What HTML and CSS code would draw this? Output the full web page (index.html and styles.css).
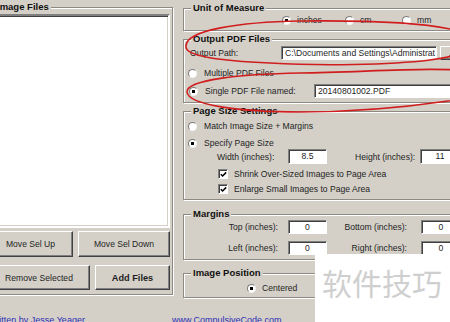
FILE: index.html
```html
<!DOCTYPE html>
<html>
<head>
<meta charset="utf-8">
<link rel="stylesheet" href="styles.css">
</head>
<body>
<div class="win">
  <div class="main">
    <div class="left">
      <fieldset class="grp grp-files">
        <legend class="ttl">Image Files</legend>
        <div class="list"></div>
        <div class="btnrow r1">
          <button class="btn b-up">Move Sel Up</button>
          <button class="btn b-down">Move Sel Down</button>
        </div>
        <div class="btnrow r2">
          <button class="btn b-rem">Remove Selected</button>
          <button class="btn b-add">Add Files</button>
        </div>
      </fieldset>
    </div>
    <div class="right">
      <fieldset class="grp g-unit">
        <legend class="ttl">Unit of Measure</legend>
        <div class="row units">
          <span class="opt o-in"><span class="rad on"></span><span>inches</span></span>
          <span class="opt o-cm"><span class="rad"></span><span>cm</span></span>
          <span class="opt o-mm"><span class="rad"></span><span>mm</span></span>
        </div>
      </fieldset>
      <fieldset class="grp g-out">
        <legend class="ttl">Output PDF Files</legend>
        <div class="row r-path">
          <span class="lbl l-path">Output Path:</span>
          <span class="inp i-path">C:\Documents and Settings\Administrat</span>
          <button class="btn browse">...</button>
        </div>
        <div class="row r-multi">
          <span class="rad"></span><span class="rlbl">Multiple PDF Files</span>
        </div>
        <div class="row r-single">
          <span class="rad on"></span><span class="rlbl l-single">Single PDF File named:</span>
          <span class="inp i-single">20140801002.PDF</span>
        </div>
      </fieldset>
      <fieldset class="grp g-page">
        <legend class="ttl">Page Size Settings</legend>
        <div class="row r-match">
          <span class="rad"></span><span class="rlbl">Match Image Size + Margins</span>
        </div>
        <div class="row r-spec">
          <span class="rad on"></span><span class="rlbl">Specify Page Size</span>
        </div>
        <div class="row r-wh">
          <span class="lbl l-w">Width (inches):</span>
          <span class="inp num i-w">8.5</span>
          <span class="lbl l-h">Height (inches):</span>
          <span class="inp num i-h">11</span>
        </div>
        <div class="row r-chk1">
          <span class="chk"><svg width="7" height="7" viewBox="0 0 7 7"><path d="M0.8,3.2 L2.6,5 L6.2,1.4" fill="none" stroke="#000" stroke-width="1.5"/></svg></span>
          <span class="clbl">Shrink Over-Sized Images to Page Area</span>
        </div>
        <div class="row r-chk2">
          <span class="chk"><svg width="7" height="7" viewBox="0 0 7 7"><path d="M0.8,3.2 L2.6,5 L6.2,1.4" fill="none" stroke="#000" stroke-width="1.5"/></svg></span>
          <span class="clbl">Enlarge Small Images to Page Area</span>
        </div>
      </fieldset>
      <fieldset class="grp g-marg">
        <legend class="ttl">Margins</legend>
        <div class="row r-m1">
          <span class="lbl ml1">Top (inches):</span>
          <span class="inp num i-m">0</span>
          <span class="lbl ml2">Bottom (inches):</span>
          <span class="inp num i-m2">0</span>
        </div>
        <div class="row r-m2">
          <span class="lbl ml1">Left (inches):</span>
          <span class="inp num i-m">0</span>
          <span class="lbl ml2">Right (inches):</span>
          <span class="inp num i-m2">0</span>
        </div>
      </fieldset>
      <fieldset class="grp g-pos">
        <legend class="ttl">Image Position</legend>
        <div class="row r-cent">
          <span class="rad on"></span><span class="clbl">Centered</span>
        </div>
      </fieldset>
    </div>
  </div>
  <div class="foot">
    <span class="credit">Written by Jesse Yeager</span>
    <span class="site">www.CompulsiveCode.com</span>
  </div>
  <div class="wm">软件技巧</div>
  <svg class="marks" width="450" height="322" viewBox="0 0 450 322">
    <path d="M186,46 C186,30 240,22 300,21 C380,20 452,24 474,37 C484,47 462,56 430,60 C390,65 320,66 270,63 C220,61 184,56 186,46 Z" fill="none" stroke="#d01e1e" stroke-width="1.6"/>
    <path d="M187,92 C186,80 240,74 300,73 C370,72 440,66 478,72 C494,84 470,98 448,101 C400,108 350,112 300,112 C240,112 188,105 187,92 Z" fill="none" stroke="#d01e1e" stroke-width="1.6"/>
  </svg>
</div>
</body>
</html>
```
FILE: styles.css
```css
body { margin: 0; }
.win {
  position: relative;
  width: 450px;
  height: 322px;
  overflow: hidden;
  background: #d4d0c8;
  font-family: "Liberation Sans", Arial, sans-serif;
  font-size: 8.6px;
  color: #1e1e1e;
}
.main { display: flex; align-items: flex-start; }
.left { flex: none; width: 189px; margin-left: -16px; padding-top: 1px; }
.right { flex: none; width: 300px; margin-left: 10px; padding-top: 2px; }

.grp {
  margin: 0;
  min-width: 0;
  box-sizing: border-box;
  border: 1px solid #8d8a83;
  box-shadow: inset 1px 1px 0 #fff, 1px 1px 0 #fff;
  padding: 0 2px 4px 3px;
}
.right .grp { width: 300px; padding: 0 0 4px 4px; }
.right .g-out { margin-top: 2px; }
.right .g-page { margin-top: 2px; }
.right .g-marg { margin-top: 8px; }
.right .g-pos { margin-top: 7px; padding-bottom: 3px; }
.ttl {
  font-weight: bold;
  font-size: 9.5px;
  line-height: 12px;
  padding: 0 2px;
  margin-left: 3px;
  background: #d4d0c8;
  color: #111;
}
.grp-files .ttl { margin-left: 7px; }

.list {
  height: 210px;
  margin-top: 1px;
  background: #fff;
  border: 2px solid;
  border-color: #808080 #fff #fff #808080;
  box-shadow: inset 1px 1px 0 #404040, inset -1px -1px 0 #d4d0c8;
}
.btnrow { display: flex; gap: 5px; }
.r1 { margin-top: 3px; height: 26px; }
.r2 { margin-top: 8px; height: 25px; }
.btn {
  font-family: "Liberation Sans", Arial, sans-serif;
  font-size: 8.6px;
  color: #1e1e1e;
  background: #d4d0c8;
  border: 1px solid;
  border-color: #fff #404040 #404040 #fff;
  box-shadow: inset -1px -1px 0 #808080;
  padding: 0;
  margin: 0;
}
.b-up { width: 85px; }
.b-down { width: 92px; }
.b-rem { width: 102px; }
.b-add { width: 75px; font-weight: bold; font-size: 9.2px; }

.row { display: flex; align-items: center; line-height: 12px; white-space: nowrap; }
.rad {
  flex: none;
  width: 9px;
  height: 9px;
  box-sizing: border-box;
  border-radius: 50%;
  border: 1px solid;
  border-color: #7c7c7c #f4f4f4 #f4f4f4 #7c7c7c;
  background: #fff;
}
.rad.on { background: radial-gradient(circle, #000 0, #000 1.4px, #fff 2px); }
.rlbl { margin-left: 7px; }
.chk {
  flex: none;
  width: 10px;
  height: 10px;
  box-sizing: border-box;
  border: 1px solid;
  border-color: #808080 #fff #fff #808080;
  box-shadow: inset 1px 1px 0 #404040;
  background: #fff;
  display: flex;
  align-items: center;
  justify-content: center;
}
.clbl { margin-left: 6px; }
.inp {
  flex: none;
  height: 14px;
  box-sizing: border-box;
  background: #fff;
  border: 1px solid;
  border-color: #808080 #fff #fff #808080;
  box-shadow: inset 1px 1px 0 #404040;
  padding: 0 3px;
  line-height: 12px;
  overflow: hidden;
  white-space: nowrap;
}
.num { text-align: center; padding: 0; }

/* Unit of Measure */
.units { height: 12px; padding-left: 94px; }
.opt { display: flex; align-items: center; gap: 6px; flex: none; }
.o-in { width: 63px; }
.o-cm { width: 57px; }

/* Output PDF Files */
.r-path { margin-top: 1px; height: 14px; }
.l-path { width: 91px; margin-left: 2px; flex: none; }
.i-path { width: 156px; }
.browse { width: 24px; height: 14px; margin-left: 3px; flex: none; }
.r-multi { margin-top: 7px; height: 12px; }
.r-single { margin-top: 5px; height: 14px; }
.r-single .rad { margin-left: 1px; }
.l-single { width: 109px; flex: none; }
.i-single { width: 150px; }

/* Page Size Settings */
.r-match { margin-top: 3px; height: 12px; }
.r-spec { margin-top: 5px; height: 12px; }
.r-wh { height: 15px; }
.r-wh .inp { height: 15px; line-height: 13px; }
.l-w { margin-left: 29px; width: 71px; flex: none; }
.i-w { width: 39px; }
.l-h { margin-left: 28px; width: 65px; flex: none; }
.i-h { width: 40px; }
.r-chk1 { margin-top: 4px; height: 12px; padding-left: 30px; }
.r-chk2 { margin-top: 3px; height: 12px; padding-left: 30px; }

/* Margins */
.r-m1 { height: 14px; }
.r-m2 { margin-top: 7px; height: 14px; }
.ml1 { width: 90px; text-align: right; margin-right: 10px; flex: none; }
.i-m { width: 39px; }
.ml2 { width: 80px; text-align: right; margin-right: 14px; flex: none; }
.i-m2 { width: 40px; }

/* Image Position */
.r-cent { margin-top: 3px; height: 12px; padding-left: 59px; }

/* footer */
.foot {
  display: flex;
  margin-top: 16px;
  font-size: 9px;
  line-height: 12px;
  color: #2d2db4;
  white-space: nowrap;
}
.credit { flex: none; width: 184px; margin-left: -12px; }

/* watermark overlay */
.wm {
  position: absolute;
  left: 315px;
  top: 254px;
  right: 0;
  bottom: 0;
  background: #fff;
  padding: 13px 0 0 7px;
  font-family: "Noto Sans CJK SC", sans-serif;
  font-size: 30px;
  line-height: 30px;
  color: #cfcfcf;
  white-space: nowrap;
}
.marks { position: absolute; left: 0; top: 0; pointer-events: none; }
```
